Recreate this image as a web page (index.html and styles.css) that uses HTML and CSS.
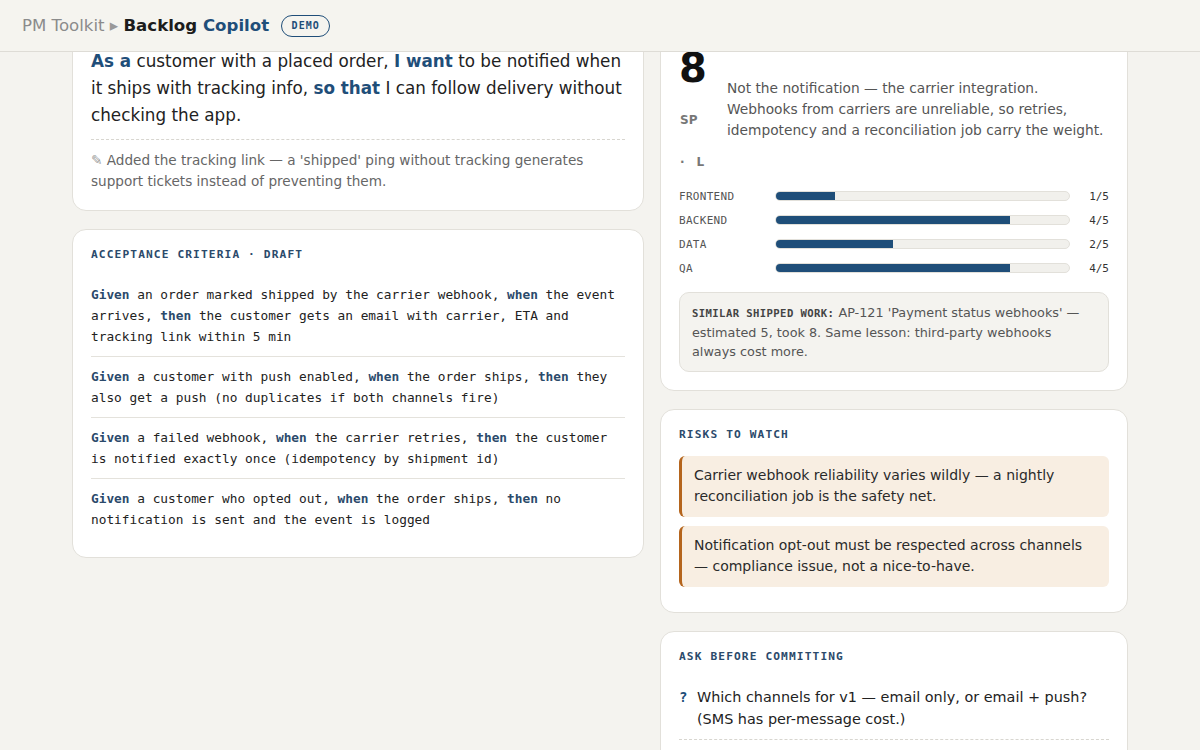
FILE: index.html
```html
<!DOCTYPE html>
<html lang="en">

<head>
  <meta charset="UTF-8">
  <meta name="viewport" content="width=device-width, initial-scale=1.0">
  <title>Backlog Copilot</title>
  <link rel="stylesheet" href="styles.css">
</head>

<body>
  <!-- top bar -->
  <header class="topbar">
    <span class="crumb">PM Toolkit <span class="sep">▸</span> </span>
    <span class="brand">Backlog <span class="accent">Copilot</span></span>
    <span class="badge">DEMO</span>
  </header>

  <div class="scroller">
    <main class="page">
      <!-- left column -->
      <div class="col">
        <section class="card">
          <h2 class="label label-story">User story · rewritten</h2>
          <p class="story"><b>As a</b> customer with a placed order, <b>I want</b> to be notified when it ships with tracking info, <b>so that</b> I can follow delivery without checking the app.</p>
          <p class="note"><span class="pen">✎</span> Added the tracking link — a 'shipped' ping without tracking generates support tickets instead of preventing them.</p>
        </section>

        <section class="card">
          <h2 class="label">Acceptance criteria · draft</h2>
          <ul class="criteria">
            <li><b>Given</b> an order marked shipped by the carrier webhook, <b>when</b> the event arrives, <b>then</b> the customer gets an email with carrier, ETA and tracking link within 5 min</li>
            <li><b>Given</b> a customer with push enabled, <b>when</b> the order ships, <b>then</b> they also get a push (no duplicates if both channels fire)</li>
            <li><b>Given</b> a failed webhook, <b>when</b> the carrier retries, <b>then</b> the customer is notified exactly once (idempotency by shipment id)</li>
            <li><b>Given</b> a customer who opted out, <b>when</b> the order ships, <b>then</b> no notification is sent and the event is logged</li>
          </ul>
        </section>
      </div>

      <!-- right column -->
      <div class="col">
        <section class="card">
          <h2 class="label">Estimate</h2>
          <div class="estimate">
            <div class="est-side">
              <span class="est-num">8</span>
              <span class="est-unit">SP</span>
              <span class="est-size"><span class="dot">·</span>L</span>
            </div>
            <p class="est-why">Not the notification — the carrier integration. Webhooks from carriers are unreliable, so retries, idempotency and a reconciliation job carry the weight.</p>
          </div>

          <div class="bars">
            <div class="bar-row">
              <span class="bar-label">FRONTEND</span>
              <div class="track"><div class="fill" style="width: 20%"></div></div>
              <span class="bar-val">1/5</span>
            </div>
            <div class="bar-row">
              <span class="bar-label">BACKEND</span>
              <div class="track"><div class="fill" style="width: 80%"></div></div>
              <span class="bar-val">4/5</span>
            </div>
            <div class="bar-row">
              <span class="bar-label">DATA</span>
              <div class="track"><div class="fill" style="width: 40%"></div></div>
              <span class="bar-val">2/5</span>
            </div>
            <div class="bar-row">
              <span class="bar-label">QA</span>
              <div class="track"><div class="fill" style="width: 80%"></div></div>
              <span class="bar-val">4/5</span>
            </div>
          </div>

          <div class="similar">
            <span class="similar-tag">SIMILAR SHIPPED WORK:</span> AP-121 'Payment status webhooks' — estimated 5, took 8. Same lesson: third-party webhooks always cost more.
          </div>
        </section>

        <section class="card">
          <h2 class="label label-loose">Risks to watch</h2>
          <div class="risk">Carrier webhook reliability varies wildly — a nightly reconciliation job is the safety net.</div>
          <div class="risk">Notification opt-out must be respected across channels — compliance issue, not a nice-to-have.</div>
        </section>

        <section class="card">
          <h2 class="label">Ask before committing</h2>
          <div class="q"><span class="qmark">?</span><span>Which channels for v1 — email only, or email + push? (SMS has per-message cost.)</span></div>
          <div class="q"><span class="qmark">?</span><span>Split shipments: one notification per parcel, or one per order?</span></div>
          <div class="q"><span class="qmark">?</span><span>Who owns the carrier contracts if we need webhook SLAs?</span></div>
        </section>
      </div>
    </main>
  </div>

  <script src="script.js"></script>
</body>

</html>
```

FILE: styles.css
```css
/* base */
html,
body {
  height: 100%;
}

body {
  margin: 0;
  display: flex;
  flex-direction: column;
  overflow: hidden;
  background-color: #f4f3ef;
  font-family: "DejaVu Sans", "Noto Sans", sans-serif;
  color: #222;
}

/* top bar */
.topbar {
  flex: none;
  height: 51px;
  display: flex;
  align-items: center;
  padding: 0 22px;
  background-color: rgba(244, 243, 239, 0.94);
  border-bottom: 1px solid #dedcd6;
  white-space: pre;
}

.crumb {
  font-size: 16.6px;
  color: #8b8b8b;
}

.crumb .sep {
  color: #999;
}

.brand {
  font-size: 16.6px;
  font-weight: bold;
  color: #1c1c1c;
}

.brand .accent {
  color: #1f4e79;
}

.badge {
  margin-left: 12px;
  padding: 4px 9.5px;
  border: 1.5px solid #1f4e79;
  border-radius: 12px;
  font: bold 10px/12px "DejaVu Sans Mono", monospace;
  letter-spacing: 1px;
  color: #1f4e79;
}

/* scrolled content area */
.scroller {
  flex: 1;
  overflow: hidden;
}

.page {
  max-width: 1056px;
  margin: 0 auto;
  padding: 24px 0 48px;
  display: grid;
  grid-template-columns: 11fr 9fr;
  gap: 16px;
  align-items: start;
}

.col {
  display: flex;
  flex-direction: column;
  gap: 18px;
}

.card {
  background-color: #fff;
  border: 1px solid #e2e0da;
  border-radius: 14px;
  padding: 18px;
}

.label {
  margin: 0 0 14px;
  font: bold 11.2px/1.2 "DejaVu Sans Mono", monospace;
  letter-spacing: 0.1em;
  text-transform: uppercase;
  color: #2b4a6b;
}

.label-story {
  margin-bottom: 14px;
}

.label-loose {
  margin-bottom: 15px;
}

/* story */
.story {
  margin: 0 0 10px;
  font-size: 16.8px;
  line-height: 27px;
  color: #222;
}

.story b {
  color: #1f4e79;
}

.note {
  margin: 0;
  padding-top: 10px;
  border-top: 1px dashed #d8d6d0;
  font-size: 13.6px;
  line-height: 21px;
  color: #666;
}

.note .pen {
  color: #999;
}

/* criteria */
.criteria {
  list-style: none;
  margin: 0;
  padding: 0;
}

.criteria li {
  padding: 9px 0;
  border-bottom: 1px solid #e4e2dc;
  font: 12.8px/21px "DejaVu Sans Mono", monospace;
  color: #222;
}

.criteria li:first-child {
  padding-top: 8px;
}

.criteria li:last-child {
  border-bottom: none;
  padding-bottom: 9px;
}

.criteria b {
  color: #2b4a6b;
}

/* estimate */
.estimate {
  display: flex;
  align-items: center;
  gap: 14px;
}

.est-side {
  width: 34px;
  flex-shrink: 0;
  display: flex;
  flex-direction: column;
}

.est-num {
  font-size: 40px;
  line-height: 40px;
  font-weight: bold;
  color: #111;
}

.est-unit,
.est-size {
  font-size: 12px;
  line-height: 16px;
  font-weight: bold;
  color: #777;
}

.est-unit {
  margin-top: 24px;
  padding-left: 1px;
}

.est-size {
  margin-top: 26px;
}

.est-size .dot {
  margin: 0 12px 0 1px;
}

.est-why {
  margin: 0;
  padding-top: 1px;
  font-size: 13.76px;
  line-height: 21px;
  color: #555;
}

/* load bars */
.bars {
  margin-top: 18px;
  display: flex;
  flex-direction: column;
  gap: 8px;
}

.bar-row {
  display: grid;
  grid-template-columns: 85px 1fr 28px;
  gap: 11px;
  align-items: center;
  height: 16px;
}

.bar-label {
  font: 11px "DejaVu Sans Mono", monospace;
  letter-spacing: 0.3px;
  color: #555;
}

.track {
  height: 10px;
  box-sizing: border-box;
  background-color: #f1f0ec;
  border: 1px solid #e2e0da;
  border-radius: 6px;
  overflow: hidden;
}

.fill {
  height: 100%;
  background-color: #1f4e79;
}

.bar-val {
  text-align: right;
  font: 11px "DejaVu Sans Mono", monospace;
  color: #333;
}

/* similar work */
.similar {
  margin-top: 16px;
  padding: 10px 12px 9px;
  background-color: #f4f3ef;
  border: 1px solid #e2e0da;
  border-radius: 10px;
  font-size: 12.8px;
  line-height: 19.5px;
  color: #555;
}

.similar-tag {
  font: bold 10.6px "DejaVu Sans Mono", monospace;
  letter-spacing: 0.4px;
  color: #444;
}

/* risks */
.risk {
  margin-bottom: 9px;
  padding: 9px 12px 10px;
  background-color: #f8eee2;
  border-left: 3px solid #b5651d;
  border-radius: 6px;
  font-size: 14px;
  line-height: 21px;
  color: #2a2a2a;
}

.risk:last-child {
  margin-bottom: 7px;
}

/* questions */
.q {
  display: flex;
  gap: 8px;
  padding: 9px 0;
  border-bottom: 1px dashed #d8d6d0;
  font-size: 14.4px;
  line-height: 22px;
  color: #222;
}

.q:first-of-type {
  padding-top: 8px;
}

.q:last-child {
  border-bottom: none;
}

.qmark {
  width: 10px;
  flex-shrink: 0;
  font: bold 14px/22px "DejaVu Sans Mono", monospace;
  color: #1f4e79;
}
```

FILE: script.js
```js
// 内容区停在估算卡片的位置
function keepScroll() {
  document.querySelector('.scroller').scrollTop = 74;
}

keepScroll();
window.addEventListener('load', keepScroll);
```
